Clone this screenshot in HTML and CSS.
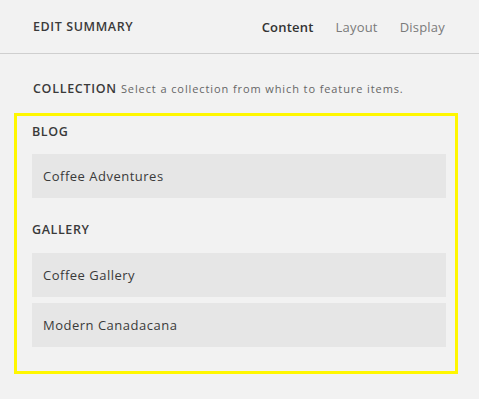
FILE: index.html
```html
<!DOCTYPE html>
<html>
<head>
<meta charset="utf-8">
<link rel="stylesheet" href="styles.css">
</head>
<body>
<div class="panel">
  <header class="header">
    <div class="title">EDIT SUMMARY</div>
    <nav class="tabs">
      <span class="tab active">Content</span>
      <span class="tab">Layout</span>
      <span class="tab">Display</span>
    </nav>
  </header>
  <section class="content">
    <div class="field-label"><span class="label">COLLECTION</span> <span class="desc">Select a collection from which to feature items.</span></div>
    <div class="picker">
      <div class="group-title first">BLOG</div>
      <div class="item">Coffee Adventures</div>
      <div class="group-title">GALLERY</div>
      <div class="item">Coffee Gallery</div>
      <div class="item">Modern Canadacana</div>
    </div>
  </section>
</div>
</body>
</html>
```
FILE: styles.css
```css
html, body {
  margin: 0;
  padding: 0;
  background: #f2f2f2;
}
body {
  font-family: "Open Sans", "Lato", sans-serif;
  color: #333;
}
.panel {
  width: 479px;
  height: 399px;
  overflow: hidden;
}
.header {
  height: 53px;
  border-bottom: 1px solid #cfcfcf;
  display: flex;
  align-items: center;
  justify-content: space-between;
  padding: 0 34px 0 33px;
}
.title {
  font-size: 12.5px;
  font-weight: 600;
  letter-spacing: 0.6px;
  color: #3a3a3a;
}
.tabs {
  display: flex;
  gap: 22px;
}
.tab {
  font-size: 13px;
  color: #7a7a7a;
  letter-spacing: 0.2px;
}
.tab.active {
  color: #333;
  font-weight: 600;
}
.content {
  padding: 23px 0 0 0;
}
.field-label {
  padding-left: 33px;
  line-height: 20px;
  height: 20px;
  margin-bottom: 16px;
  white-space: nowrap;
}
.label {
  font-size: 12.5px;
  font-weight: 600;
  letter-spacing: 0.7px;
  color: #3a3a3a;
}
.desc {
  font-size: 11px;
  color: #666;
  letter-spacing: 0.9px;
}
.picker {
  margin-left: 14px;
  width: 414px;
  border: 3px solid #fff700;
  padding: 0 9px 24px 15px;
}
.group-title {
  font-size: 12.5px;
  font-weight: 600;
  letter-spacing: 0.6px;
  line-height: 20px;
  color: #3a3a3a;
  margin: 22px 0 13px;
}
.group-title.first {
  margin: 6px 0 12px;
}
.item {
  height: 44px;
  background: #e6e6e6;
  display: flex;
  align-items: center;
  padding-left: 11px;
  font-size: 13px;
  letter-spacing: 0.5px;
  color: #3a3a3a;
}
.item + .item {
  margin-top: 6px;
}
```
